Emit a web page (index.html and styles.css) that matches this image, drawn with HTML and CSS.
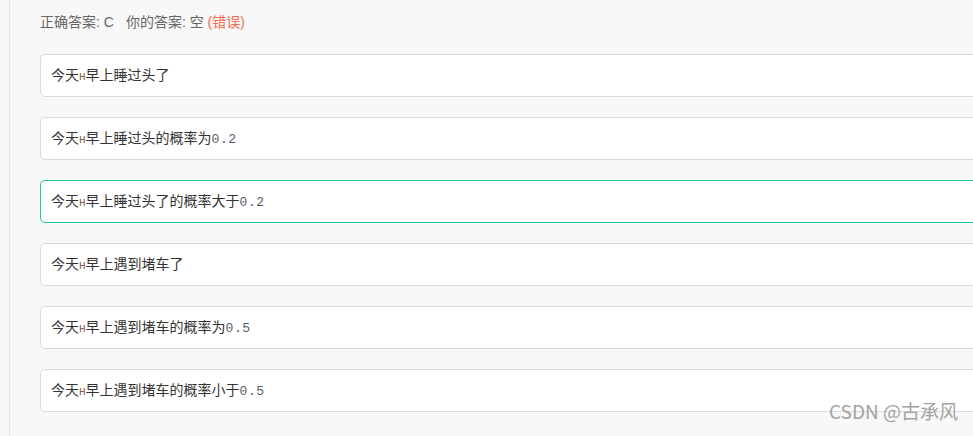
FILE: index.html
```html
<!DOCTYPE html>
<html lang="zh-CN">
<head>
    <meta charset="UTF-8">
    <meta name="viewport" content="width=device-width, initial-scale=1.0">
    <title>答题结果</title>
    <link rel="stylesheet" href="styles.css">
</head>
<body>
    <div class="page">
        <div class="side"></div>
        <div class="main">
            <div class="result">
                正确答案: C<span class="sep"></span>你的答案: 空 <span class="wrong">(错误)</span>
            </div>

            <ul class="options">
                <li class="option">今天<span class="h">H</span>早上睡过头了</li>
                <li class="option">今天<span class="h">H</span>早上睡过头的概率为<span class="num">0.2</span></li>
                <li class="option active">今天<span class="h">H</span>早上睡过头了的概率大于<span class="num">0.2</span></li>
                <li class="option">今天<span class="h">H</span>早上遇到堵车了</li>
                <li class="option">今天<span class="h">H</span>早上遇到堵车的概率为<span class="num">0.5</span></li>
                <li class="option">今天<span class="h">H</span>早上遇到堵车的概率小于<span class="num">0.5</span></li>
            </ul>
        </div>
    </div>

    <div class="watermark">CSDN @古承风</div>
</body>
</html>
```

FILE: styles.css
```css
html, body {
    margin: 0;
    padding: 0;
    height: 100%;
    overflow: hidden;
}

body {
    font-family: "Noto Sans CJK SC", "Noto Sans", sans-serif;
    background: #f8f8f8;
}

.page {
    display: flex;
    height: 100%;
}

.side {
    width: 9px;
    flex-shrink: 0;
    background: #f5f6f9;
    border-right: 1px solid #e4e4e4;
}

.main {
    flex: 1;
    padding: 12px 0 0 30px;
    min-width: 0;
}

.result {
    font-family: "Liberation Sans", "Noto Sans CJK SC", sans-serif;
    font-size: 14px;
    line-height: 20px;
    color: #666;
}

.sep {
    display: inline-block;
    width: 12px;
}

.wrong {
    color: #f76b4f;
}

.options {
    list-style: none;
    margin: 22px 0 0 0;
    padding: 0;
    width: calc(100% + 20px);
}

.option {
    box-sizing: border-box;
    height: 43px;
    line-height: 39px;
    padding: 0 10px 2px;
    margin-bottom: 20px;
    background: #fff;
    border: 1px solid #dadada;
    border-radius: 5px;
    font-size: 14px;
    color: #333;
    white-space: nowrap;
}

.option.active {
    border-color: #1fc39e;
}

.h {
    font-family: "Liberation Mono", monospace;
    font-size: 11px;
    color: #8a5a4a;
}

.num {
    font-family: "Liberation Mono", "DejaVu Sans Mono", monospace;
    font-size: 13px;
    color: #555c66;
    letter-spacing: 0.5px;
}

.watermark {
    position: absolute;
    right: 15px;
    bottom: 12px;
    font-size: 19px;
    color: #a3a3a3;
    font-family: "Noto Sans CJK SC", "Noto Sans", sans-serif;
}
```
